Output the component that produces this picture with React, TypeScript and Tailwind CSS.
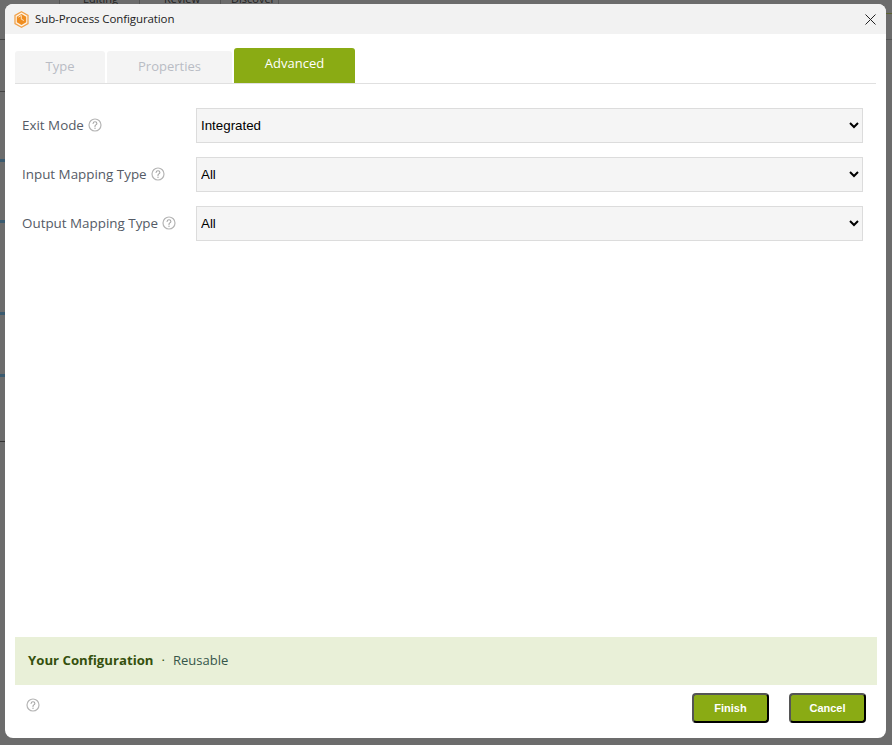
const fieldRows = [
  { label: 'Exit Mode', value: 'Integrated', options: ['Integrated', 'Isolated'] },
  { label: 'Input Mapping Type', value: 'All', options: ['All', 'Selected'] },
  { label: 'Output Mapping Type', value: 'All', options: ['All', 'Selected'] },
];

function HelpIcon() {
  return (
    <svg width="14" height="14" viewBox="0 0 14 14" fill="none" className="shrink-0">
      <circle cx="7" cy="7" r="6" stroke="#b5b5b5" strokeWidth="1.2" />
      <path
        d="M5.1 5.5c.1-1 .9-1.7 1.9-1.7 1.1 0 1.9.7 1.9 1.6 0 .8-.5 1.1-1.1 1.5-.6.4-.8.7-.8 1.3v.2"
        stroke="#a6a6a6"
        strokeWidth="1.1"
        strokeLinecap="round"
      />
      <circle cx="7" cy="10.2" r="0.7" fill="#a6a6a6" />
    </svg>
  );
}

function Logo() {
  return (
    <svg width="15" height="17" viewBox="0 0 15 17" className="shrink-0">
      <path d="M7.5.8 14 4.5v8L7.5 16.2 1 12.5v-8z" fill="#fff3e4" stroke="#f0a24c" strokeWidth="1.3" />
      <path d="M7.5 3 12.2 5.7v5.6L7.5 14l-4.7-2.7V5.7z" fill="#ef8d20" />
      <path d="M4.3 6.2 7.3 4.4v3.8l2.6 1.3" fill="none" stroke="#fde3c4" strokeWidth="1" />
    </svg>
  );
}

function BackgroundPage() {
  return (
    <div className="absolute inset-0 bg-[#6c6c6c]">
      <div className="flex h-[4px] items-end overflow-hidden pl-[59px] font-['Open_Sans',sans-serif] text-[11px] leading-[10px] text-[#222]">
        <span className="w-[81px] shrink-0 border-x border-[#555] pl-[23px]">Editing</span>
        <span className="w-[81px] shrink-0 border-r border-[#555] pl-[24px]">Review</span>
        <span className="w-[58px] shrink-0 border-r border-[#555] pl-[10px]">Discover</span>
      </div>
      <div className="absolute left-0 top-[39px] h-px w-[5px] bg-[#444]" />
      <div className="absolute left-0 top-[91px] h-px w-[5px] bg-[#444]" />
      <div className="absolute left-0 top-[159px] h-[3px] w-[5px] bg-[#3b5b70]" />
      <div className="absolute left-0 top-[220px] h-[3px] w-[5px] bg-[#3b5b70]" />
      <div className="absolute left-0 top-[312px] h-[3px] w-[5px] bg-[#3b5b70]" />
      <div className="absolute left-0 top-[374px] h-[3px] w-[5px] bg-[#3b5b70]" />
      <div className="absolute left-0 top-[441px] h-px w-[5px] bg-[#333]" />
      <div className="absolute right-0 top-[13px] h-px w-[6px] bg-[#5c6330]" />
      <div className="absolute right-0 top-[39px] h-px w-[6px] bg-[#555]" />
    </div>
  );
}

export default function App() {
  return (
    <div className="relative h-[745px] w-[892px] overflow-hidden">
      <BackgroundPage />
      <div className="absolute left-[5px] top-[4px] flex h-[734px] w-[881px] flex-col overflow-hidden rounded-[8px] bg-white font-['Open_Sans',sans-serif]">
        <div className="flex h-[30px] shrink-0 items-center bg-[#f2f2f2] pl-[9px] pr-[9px]">
          <Logo />
          <span className="ml-[6px] text-[11.5px] tracking-[-0.1px] text-[#222]">Sub-Process Configuration</span>
          <svg width="11" height="11" viewBox="0 0 11 11" className="ml-auto mr-[1px]">
            <path d="M.5.5l10 10M10.5.5l-10 10" stroke="#222" strokeWidth="1" />
          </svg>
        </div>

        <div className="mx-[10px] mt-[14px] flex h-[36px] shrink-0 items-end gap-[2px] border-b border-[#e0e0e0]">
          <div className="flex h-[32px] w-[90px] items-center justify-center rounded-t-[3px] bg-[#f4f4f4] text-[13px] text-[#b9bcc4]">
            Type
          </div>
          <div className="flex h-[32px] w-[125px] items-center justify-center rounded-t-[3px] bg-[#f4f4f4] text-[13px] text-[#b9bcc4]">
            Properties
          </div>
          <div className="flex h-[35px] w-[121px] items-center justify-center rounded-t-[3px] bg-[#8aab14] pb-[4px] text-[13px] text-white">
            Advanced
          </div>
        </div>

        <div className="mt-[24px] flex flex-col gap-[14px] pl-[17px] pr-[23px]">
          {fieldRows.map((row) => (
            <div key={row.label} className="flex h-[35px] items-center">
              <label className="flex w-[174px] shrink-0 items-center gap-[4px] text-[13.4px] text-[#555b66]">
                {row.label}
                <HelpIcon />
              </label>
              <select
                defaultValue={row.value}
                className="h-[35px] w-full border border-[#dcdcdc] bg-[#f5f5f5] font-['Liberation_Sans',sans-serif] text-[13.33px] text-black"
              >
                {row.options.map((o) => (
                  <option key={o}>{o}</option>
                ))}
              </select>
            </div>
          ))}
        </div>

        <div className="ml-[10px] mr-[9px] mt-auto flex h-[48px] shrink-0 items-center bg-[#e9f0d8] pl-[13px] text-[13.2px]">
          <span className="font-bold text-[#35500d]">Your Configuration</span>
          <span className="mx-[8px] text-[#35500d]">·</span>
          <span className="text-[13px] font-normal text-[#35564a]">Reusable</span>
        </div>

        <div className="flex h-[53px] shrink-0 items-start pl-[21px] pr-[20px]">
          <div className="mt-[13px]">
            <HelpIcon />
          </div>
          <div className="ml-auto mt-[8px] flex gap-[20px] font-['Liberation_Sans',sans-serif] text-[11px] font-bold text-white">
            <button className="h-[30px] w-[77px] rounded-[4px] border-2 border-b-black border-l-[#555] border-r-black border-t-[#555] bg-[#8aab14]">
              Finish
            </button>
            <button className="h-[30px] w-[77px] rounded-[4px] border-2 border-b-black border-l-[#555] border-r-black border-t-[#555] bg-[#8aab14]">
              Cancel
            </button>
          </div>
        </div>
      </div>
    </div>
  );
}
